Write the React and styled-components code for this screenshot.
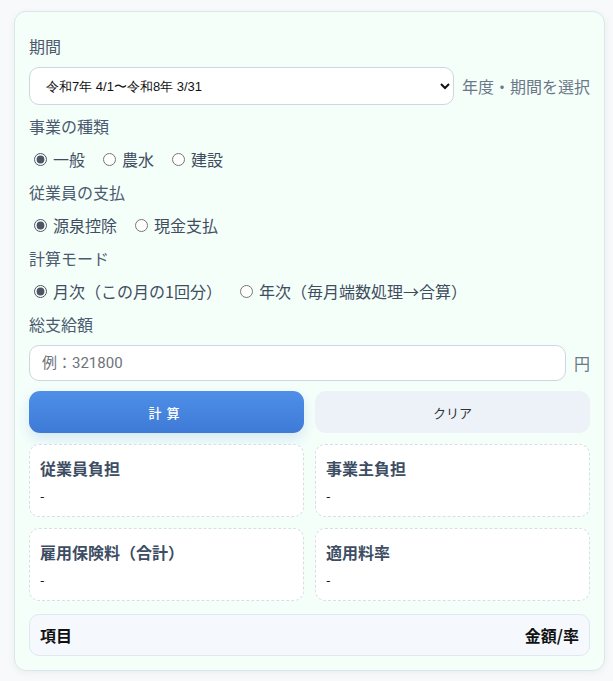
import React, { useState } from "react";
import styled, { createGlobalStyle } from "styled-components";

const GlobalStyle = createGlobalStyle`
  html, body {
    margin: 0;
    padding: 0;
    background: #f7f9fa;
  }
  body {
    font-family: "Noto Sans CJK JP", "Noto Sans", sans-serif;
    color: #1f2937;
  }
`;

const Page = styled.div`
  padding: 11px 8px 11px 14px;
`;

const Card = styled.div`
  background: #f5fffa;
  border: 1px solid #d9e6ea;
  border-radius: 12px;
  box-shadow: 0 2px 8px rgba(15, 40, 60, 0.05);
  padding: 23px 14px 14px;
  display: flex;
  flex-direction: column;
  gap: 10px;
`;

const Label = styled.div`
  font-size: 16px;
  line-height: 22px;
  color: #4b5a6e;
`;

const Row = styled.div`
  display: flex;
  align-items: center;
  gap: 8px;
`;

const Select = styled.select`
  flex: 1;
  height: 38px;
  border: 1px solid #cdd6e2;
  border-radius: 10px;
  background: #fff;
  padding: 0 8px 0 12px;
  font-family: "Liberation Sans", Arial, sans-serif;
  font-size: 13px;
  color: #111;
`;

const Hint = styled.span`
  font-size: 16px;
  color: #6b7888;
  white-space: nowrap;
`;

const RadioRow = styled.div`
  display: flex;
  align-items: center;
  height: 24px;
  gap: 18px;
  padding-left: 5px;
`;

const RadioLabel = styled.label`
  display: flex;
  align-items: center;
  gap: 6px;
  font-size: 16px;
  color: #3f4d60;
  white-space: nowrap;
`;

const Radio = styled.input`
  margin: 0;
  width: 13px;
  height: 13px;
  accent-color: #4b5563;
`;

const Input = styled.input`
  flex: 1;
  height: 36px;
  box-sizing: border-box;
  border: 1px solid #cdd6e2;
  border-radius: 10px;
  background: #fff;
  padding: 0 12px;
  font-family: "Roboto", "Noto Sans CJK JP", sans-serif;
  font-size: 15px;
  &::placeholder {
    color: #6f737a;
  }
`;

const Unit = styled.span`
  font-size: 16px;
  color: #6b7888;
`;

const Buttons = styled.div`
  display: grid;
  grid-template-columns: 1fr 1fr;
  gap: 11px;
`;

const Button = styled.button`
  height: 42px;
  border: none;
  border-radius: 11px;
  font-family: inherit;
  font-size: 13px;
  font-weight: ${(p) => (p.$primary ? 500 : 400)};
  cursor: pointer;
  background: ${(p) =>
    p.$primary ? "linear-gradient(180deg, #4f8fe8 0%, #3e7ad6 100%)" : "#edf2f9"};
  color: ${(p) => (p.$primary ? "#fff" : "#333")};
  letter-spacing: ${(p) => (p.$primary ? "5px" : "0")};
  box-shadow: ${(p) => (p.$primary ? "0 6px 14px rgba(62, 122, 214, 0.18)" : "none")};
`;

const Results = styled.div`
  display: grid;
  grid-template-columns: 1fr 1fr;
  gap: 11px;
  margin-top: 1px;
`;

const ResultBox = styled.div`
  height: 73px;
  box-sizing: border-box;
  background: #fff;
  border: 1px dashed #d3e0e8;
  border-radius: 10px;
  padding: 12px 10px;
`;

const ResultTitle = styled.div`
  font-size: 16px;
  font-weight: 700;
  color: #3d4d63;
  line-height: 22px;
`;

const ResultValue = styled.div`
  font-size: 13px;
  color: #111;
  margin-top: 8px;
  line-height: 18px;
`;

const TableHead = styled.div`
  margin-top: 3px;
  height: 42px;
  box-sizing: border-box;
  background: #f5f9fd;
  border: 1px solid #dfe8f0;
  border-radius: 10px;
  display: flex;
  align-items: center;
  justify-content: space-between;
  padding: 0 10px;
  font-size: 16px;
  font-weight: 700;
  color: #111;
`;

export default function App() {
  const [biz, setBiz] = useState("general");
  const [pay, setPay] = useState("withhold");
  const [mode, setMode] = useState("month");
  const [amount, setAmount] = useState("");

  return (
    <>
      <GlobalStyle />
      <Page>
        <Card>
          <Label>期間</Label>
          <Row>
            <Select defaultValue="r7">
              <option value="r7">令和7年 4/1〜令和8年 3/31</option>
              <option value="r6">令和6年 4/1〜令和7年 3/31</option>
            </Select>
            <Hint>年度・期間を選択</Hint>
          </Row>

          <Label>事業の種類</Label>
          <RadioRow>
            {[
              ["general", "一般"],
              ["agri", "農水"],
              ["build", "建設"],
            ].map(([v, t]) => (
              <RadioLabel key={v}>
                <Radio type="radio" name="biz" checked={biz === v} onChange={() => setBiz(v)} />
                {t}
              </RadioLabel>
            ))}
          </RadioRow>

          <Label>従業員の支払</Label>
          <RadioRow>
            {[
              ["withhold", "源泉控除"],
              ["cash", "現金支払"],
            ].map(([v, t]) => (
              <RadioLabel key={v}>
                <Radio type="radio" name="pay" checked={pay === v} onChange={() => setPay(v)} />
                {t}
              </RadioLabel>
            ))}
          </RadioRow>

          <Label>計算モード</Label>
          <RadioRow>
            {[
              ["month", "月次（この月の1回分）"],
              ["year", "年次（毎月端数処理→合算）"],
            ].map(([v, t]) => (
              <RadioLabel key={v}>
                <Radio type="radio" name="mode" checked={mode === v} onChange={() => setMode(v)} />
                {t}
              </RadioLabel>
            ))}
          </RadioRow>

          <Label>総支給額</Label>
          <Row>
            <Input
              placeholder="例：321800"
              value={amount}
              onChange={(e) => setAmount(e.target.value)}
            />
            <Unit>円</Unit>
          </Row>

          <Buttons>
            <Button $primary>計算</Button>
            <Button onClick={() => setAmount("")}>クリア</Button>
          </Buttons>

          <Results>
            {["従業員負担", "事業主負担", "雇用保険料（合計）", "適用料率"].map((t) => (
              <ResultBox key={t}>
                <ResultTitle>{t}</ResultTitle>
                <ResultValue>-</ResultValue>
              </ResultBox>
            ))}
          </Results>

          <TableHead>
            <span>項目</span>
            <span>金額/率</span>
          </TableHead>
        </Card>
      </Page>
    </>
  );
}
